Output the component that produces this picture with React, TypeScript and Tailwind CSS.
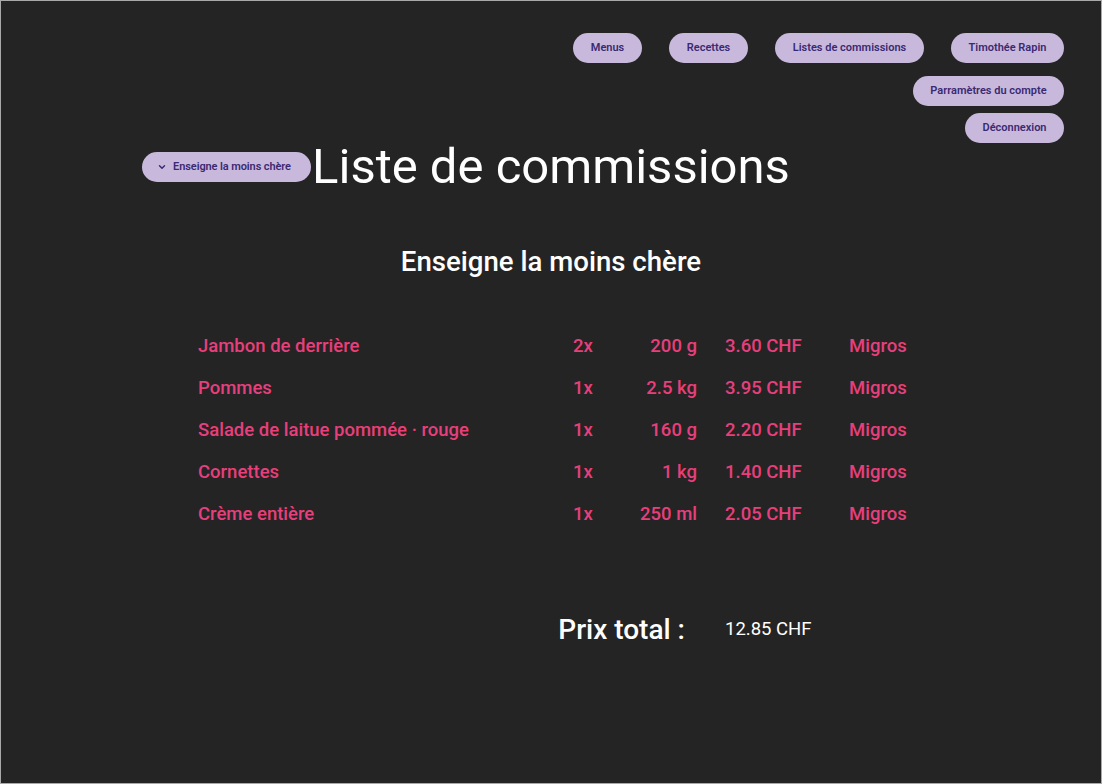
import React from "react";
import { ChevronDown } from "lucide-react";

const items = [
  { name: "Jambon de derrière", qty: "2x", amount: "200 g", price: "3.60 CHF", store: "Migros" },
  { name: "Pommes", qty: "1x", amount: "2.5 kg", price: "3.95 CHF", store: "Migros" },
  { name: "Salade de laitue pommée · rouge", qty: "1x", amount: "160 g", price: "2.20 CHF", store: "Migros" },
  { name: "Cornettes", qty: "1x", amount: "1 kg", price: "1.40 CHF", store: "Migros" },
  { name: "Crème entière", qty: "1x", amount: "250 ml", price: "2.05 CHF", store: "Migros" },
];

function Pill({ children, className = "" }: { children: React.ReactNode; className?: string }) {
  return (
    <button
      className={
        "h-[30px] rounded-full bg-[#c8b9dc] text-[#3b2972] text-[11px] font-semibold flex items-center justify-center " +
        className
      }
    >
      {children}
    </button>
  );
}

export default function App() {
  return (
    <div
      className="w-[1102px] h-[784px] border border-[#a9a9a9] bg-[#242424] text-white overflow-hidden"
      style={{ fontFamily: "Roboto, 'Noto Sans', sans-serif" }}
    >
      <nav className="mt-[32px] flex justify-end gap-[27px] pr-[37px]">
        <Pill className="w-[69px]">Menus</Pill>
        <Pill className="w-[79px]">Recettes</Pill>
        <Pill className="w-[149px]">Listes de commissions</Pill>
        <div className="relative">
          <Pill className="w-[113px]">Timothée Rapin</Pill>
          <div className="absolute right-0 top-[43px] flex flex-col items-end gap-[7px]">
            <Pill className="w-[151px]">Parramètres du compte</Pill>
            <Pill className="w-[99px]">Déconnexion</Pill>
          </div>
        </div>
      </nav>

      <div className="mt-[76px] grid grid-cols-[1fr_auto_1fr] items-center">
        <div className="flex justify-end">
          <button className="h-[30px] w-[169px] rounded-full bg-[#c8b9dc] text-[#3b2972] flex items-center pl-[15px]">
            <ChevronDown size={10} strokeWidth={3.5} />
            <span className="ml-[6px] text-[11px] font-semibold tracking-[-0.1px]">Enseigne la moins chère</span>
          </button>
        </div>
        <h1 className="text-[49px] leading-[56px] font-normal px-[1px]">Liste de commissions</h1>
        <div />
      </div>

      <h2 className="mt-[51px] text-center text-[27.6px] leading-[32px] font-medium">Enseigne la moins chère</h2>

      <div className="mt-[48px] pl-[197px] text-[#e83f7b] text-[18.5px] font-medium">
        {items.map((it) => (
          <div key={it.name} className="flex h-[42px] items-center">
            <div className="w-[375px]">{it.name}</div>
            <div className="w-[40px]">{it.qty}</div>
            <div className="w-[84px] text-right">{it.amount}</div>
            <div className="ml-[28px] w-[124px]">{it.price}</div>
            <div>{it.store}</div>
          </div>
        ))}
      </div>

      <div className="mt-[78px] pl-[197px] flex h-[32px] items-center">
        <div className="w-[499px] pr-[12px] text-right text-[28px] font-medium">Prix total :</div>
        <div className="ml-[28px] text-[18.5px]">12.85 CHF</div>
      </div>
    </div>
  );
}
